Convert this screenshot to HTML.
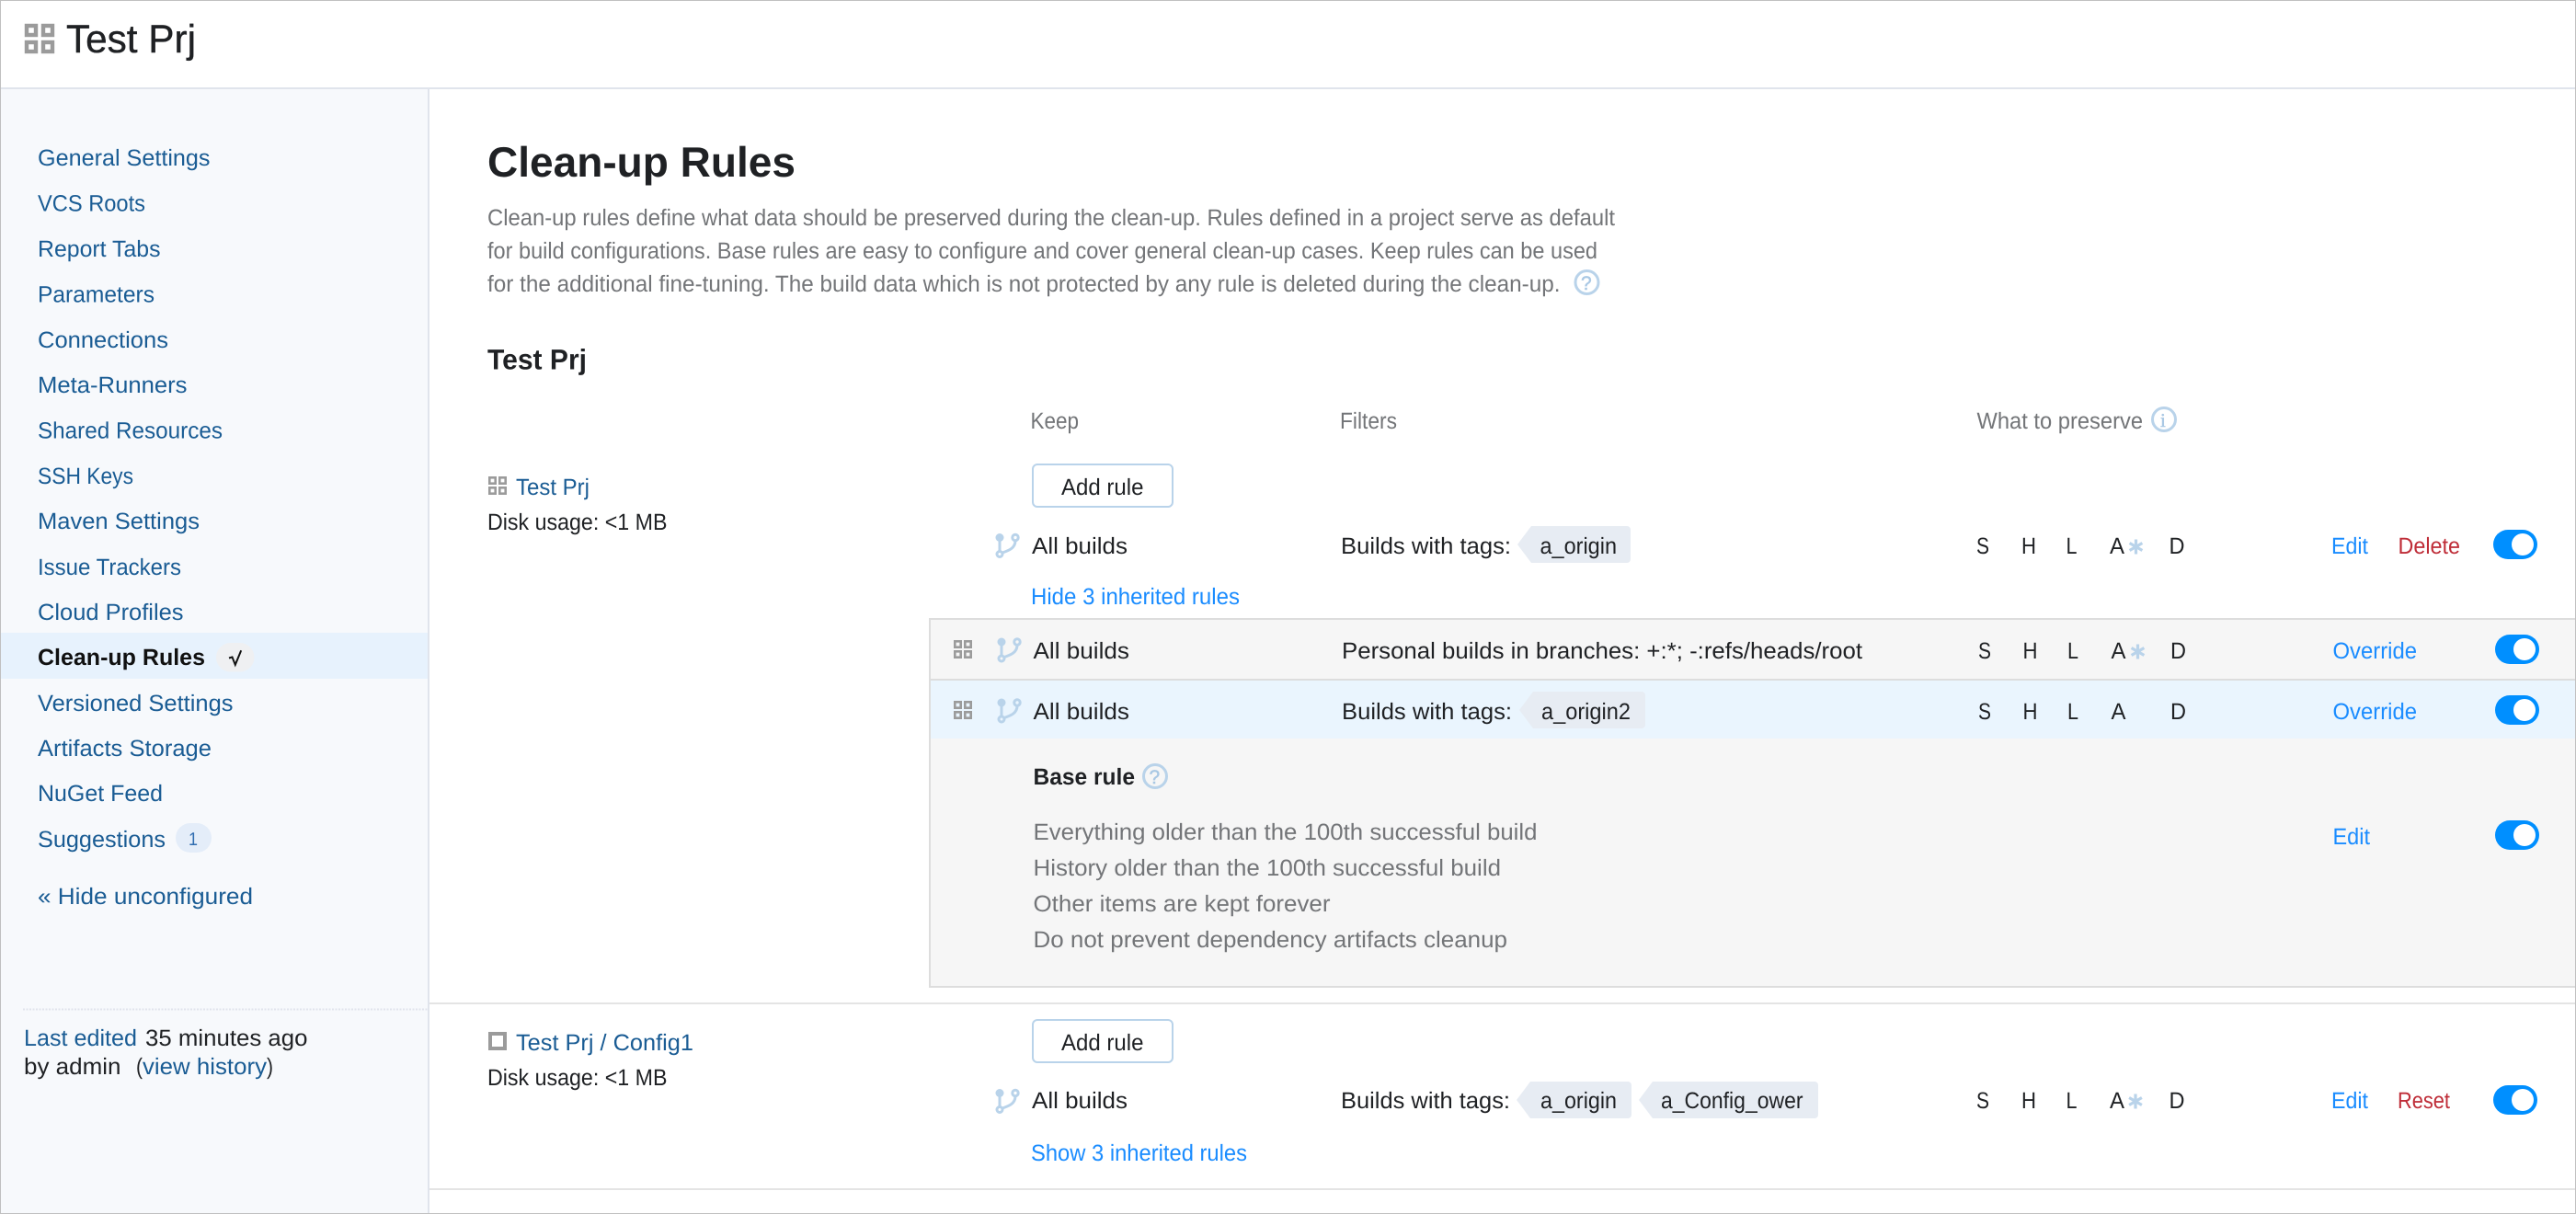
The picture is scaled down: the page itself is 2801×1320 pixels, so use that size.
<!DOCTYPE html>
<html lang="en"><head><meta charset="utf-8"><title>Clean-up Rules</title>
<style>
html,body{margin:0;padding:0;background:#fff;width:2801px;height:1320px;overflow:hidden}
svg{display:block}
text{font-family:"Liberation Sans",Arial,sans-serif;font-size:25px;fill:#1f2124;text-rendering:geometricPrecision;white-space:pre}
.n{fill:#1a5c94}
.g{fill:#737578}
.l{fill:#1a8cff}
.r{fill:#bf2d38}
.b{font-weight:700}
</style></head><body>
<svg xmlns="http://www.w3.org/2000/svg" width="2801" height="1320" viewBox="0 0 2801 1320">
<rect width="2801" height="1320" fill="#fff"/>
<!-- sidebar -->
<rect x="1" y="97" width="464" height="1222" fill="#f7f9fc"/>
<rect x="0" y="95" width="2801" height="2" fill="#e0e4ec"/>
<rect x="465" y="97" width="2" height="1222" fill="#e0e4ec"/>
<rect x="1" y="688" width="464" height="50" fill="#e7f2fd"/>
<!-- header -->
<g fill="none" stroke="#9b9b9b" stroke-width="4.4">
<rect x="29" y="28" width="10" height="10"/><rect x="47" y="28" width="10" height="10"/>
<rect x="29" y="46" width="10" height="10"/><rect x="47" y="46" width="10" height="10"/>
</g>
<text x="72" y="57" style="font-size:43px" textLength="141" lengthAdjust="spacingAndGlyphs" stroke="#1f2124" stroke-width=".4">Test Prj</text>
<!-- nav -->
<text class="n" x="41" y="180" textLength="187.5" lengthAdjust="spacingAndGlyphs">General Settings</text>
<text class="n" x="41" y="229.5" textLength="117" lengthAdjust="spacingAndGlyphs">VCS Roots</text>
<text class="n" x="41" y="279" textLength="133.5" lengthAdjust="spacingAndGlyphs">Report Tabs</text>
<text class="n" x="41" y="328.5" textLength="127" lengthAdjust="spacingAndGlyphs">Parameters</text>
<text class="n" x="41" y="378" textLength="142" lengthAdjust="spacingAndGlyphs">Connections</text>
<text class="n" x="41" y="427" textLength="162.5" lengthAdjust="spacingAndGlyphs">Meta-Runners</text>
<text class="n" x="41" y="476.5" textLength="201" lengthAdjust="spacingAndGlyphs">Shared Resources</text>
<text class="n" x="41" y="526" textLength="104" lengthAdjust="spacingAndGlyphs">SSH Keys</text>
<text class="n" x="41" y="575" textLength="176" lengthAdjust="spacingAndGlyphs">Maven Settings</text>
<text class="n" x="41" y="625" textLength="156" lengthAdjust="spacingAndGlyphs">Issue Trackers</text>
<text class="n" x="41" y="674" textLength="158.5" lengthAdjust="spacingAndGlyphs">Cloud Profiles</text>
<text class="b" style="fill:#111" x="41" y="723" textLength="182" lengthAdjust="spacingAndGlyphs">Clean-up Rules</text>
<rect x="235" y="699" width="41.5" height="31.5" rx="15.7" fill="#eff0f2"/>
<path d="M249 715.5l3.5-1 3.3 8.3 6.4-15.5" fill="none" stroke="#111" stroke-width="2"/>
<text class="n" x="41" y="773" textLength="212.5" lengthAdjust="spacingAndGlyphs">Versioned Settings</text>
<text class="n" x="41" y="822" textLength="189" lengthAdjust="spacingAndGlyphs">Artifacts Storage</text>
<text class="n" x="41" y="871" textLength="136" lengthAdjust="spacingAndGlyphs">NuGet Feed</text>
<text class="n" x="41" y="921" textLength="139" lengthAdjust="spacingAndGlyphs">Suggestions</text>
<rect x="191" y="895" width="39" height="32" rx="16" fill="#e4edf9"/>
<text x="205" y="919" style="font-size:20px;fill:#2f6cb0" textLength="10" lengthAdjust="spacingAndGlyphs">1</text>
<text class="n" x="41" y="983" textLength="234" lengthAdjust="spacingAndGlyphs">« Hide unconfigured</text>
<line x1="25" y1="1097.5" x2="465" y2="1097.5" stroke="#e0e4ec" stroke-width="2" stroke-dasharray="2 1.5"/>
<text class="n" x="26" y="1137" textLength="123" lengthAdjust="spacingAndGlyphs">Last edited</text>
<text x="158" y="1137" textLength="176.5" lengthAdjust="spacingAndGlyphs">35 minutes ago</text>
<text x="26" y="1168" textLength="105.5" lengthAdjust="spacingAndGlyphs">by admin</text>
<text x="148" y="1168" textLength="7" lengthAdjust="spacingAndGlyphs">(</text>
<text class="n" x="155" y="1168" textLength="135" lengthAdjust="spacingAndGlyphs">view history</text>
<text x="290" y="1168" textLength="7" lengthAdjust="spacingAndGlyphs">)</text>
<!-- heading -->
<text class="b" x="530" y="192" style="font-size:46px;fill:#1f2124" textLength="335" lengthAdjust="spacingAndGlyphs">Clean-up Rules</text>
<text class="g" x="530" y="245" textLength="1226" lengthAdjust="spacingAndGlyphs">Clean-up rules define what data should be preserved during the clean-up. Rules defined in a project serve as default</text>
<text class="g" x="530" y="281" textLength="1207" lengthAdjust="spacingAndGlyphs">for build configurations. Base rules are easy to configure and cover general clean-up cases. Keep rules can be used</text>
<text class="g" x="530" y="317" textLength="1166.5" lengthAdjust="spacingAndGlyphs">for the additional fine-tuning. The build data which is not protected by any rule is deleted during the clean-up.</text>
<circle cx="1725.5" cy="307" r="12.5" fill="none" stroke="#b9d3ea" stroke-width="3"/>
<text x="1719" y="315" style="font-size:21px;fill:#a9c8e4" stroke="#a9c8e4" stroke-width=".5">?</text>
<text class="b" x="530" y="401.5" style="font-size:31px" textLength="108" lengthAdjust="spacingAndGlyphs">Test Prj</text>
<!-- table header -->
<text class="g" x="1120.5" y="466" textLength="52.5" lengthAdjust="spacingAndGlyphs">Keep</text>
<text class="g" x="1457" y="466" textLength="62" lengthAdjust="spacingAndGlyphs">Filters</text>
<text class="g" x="2149.5" y="466" textLength="180.5" lengthAdjust="spacingAndGlyphs">What to preserve</text>
<circle cx="2353" cy="456" r="12.5" fill="none" stroke="#b9d3ea" stroke-width="3"/>
<text x="2349" y="464" style="font-size:21px;font-family:'Liberation Serif',serif;fill:#a9c8e4" stroke="#a9c8e4" stroke-width=".5">i</text>
<!-- Project row -->
<g fill="none" stroke="#9b9b9b" stroke-width="2.6">
<rect x="532.3" y="519.3" width="6.4" height="6.4"/><rect x="543.3" y="519.3" width="6.4" height="6.4"/>
<rect x="532.3" y="530.3" width="6.4" height="6.4"/><rect x="543.3" y="530.3" width="6.4" height="6.4"/>
</g>
<text class="n" x="561" y="538" textLength="80" lengthAdjust="spacingAndGlyphs">Test Prj</text>
<text x="530" y="576" textLength="195.5" lengthAdjust="spacingAndGlyphs">Disk usage: &lt;1 MB</text>
<rect x="1123" y="505" width="152" height="46" rx="5" fill="#fff" stroke="#b9d3ea" stroke-width="2"/>
<text x="1154" y="538" textLength="89.5" lengthAdjust="spacingAndGlyphs">Add rule</text>
<g transform="translate(1087 584.5)" fill="none" stroke="#b9d3ea" stroke-width="3"><circle r="4.5" fill="#b9d3ea" stroke="none"/><path d="M0 0V16"/><circle cy="18" r="3"/><circle cx="17" r="3.2"/><path d="M17 3.5c0 8-7 10.5-14 13"/></g>
<text x="1122" y="602" textLength="104" lengthAdjust="spacingAndGlyphs">All builds</text>
<text x="1458" y="602" textLength="185" lengthAdjust="spacingAndGlyphs">Builds with tags:</text>
<path d="M1650 592L1665 572H1769a4 4 0 0 1 4 4V608a4 4 0 0 1-4 4H1665Z" fill="#e7ecf3"/>
<text x="1674.5" y="602" textLength="83.5" lengthAdjust="spacingAndGlyphs">a_origin</text>
<text x="2149" y="602" textLength="14" lengthAdjust="spacingAndGlyphs">S</text>
<text x="2198" y="602" textLength="16" lengthAdjust="spacingAndGlyphs">H</text>
<text x="2246.5" y="602" textLength="12" lengthAdjust="spacingAndGlyphs">L</text>
<text x="2294" y="602" textLength="16" lengthAdjust="spacingAndGlyphs">A</text>
<g stroke="#b9d3ea" stroke-width="3.2"><path d="M2322.5 586.5v16M2315.6 590.5l13.8 8M2315.6 598.5l13.8-8"/></g>
<text x="2358.5" y="602" textLength="17" lengthAdjust="spacingAndGlyphs">D</text>
<text class="l" x="2535" y="602" textLength="40" lengthAdjust="spacingAndGlyphs">Edit</text>
<text class="r" x="2607.5" y="602" textLength="67.5" lengthAdjust="spacingAndGlyphs">Delete</text>
<rect x="2711" y="576" width="48" height="32" rx="16" fill="#008fff"/><circle cx="2743" cy="592" r="12" fill="#fff"/>
<text class="l" x="1121" y="657" textLength="227" lengthAdjust="spacingAndGlyphs">Hide 3 inherited rules</text>
<!-- inherited box -->
<rect x="1010" y="672" width="1790" height="402" fill="#ddd"/>
<rect x="1012" y="674" width="1788" height="64" fill="#f6f6f6"/>
<rect x="1012" y="740" width="1788" height="63" fill="#eaf5fe"/>
<rect x="1012" y="803" width="1788" height="269" fill="#f6f6f6"/>
<g fill="none" stroke="#9b9b9b" stroke-width="2.6">
<rect x="1038.3" y="697.3" width="6.4" height="6.4"/><rect x="1049.3" y="697.3" width="6.4" height="6.4"/>
<rect x="1038.3" y="708.3" width="6.4" height="6.4"/><rect x="1049.3" y="708.3" width="6.4" height="6.4"/>
<rect x="1038.3" y="763.3" width="6.4" height="6.4"/><rect x="1049.3" y="763.3" width="6.4" height="6.4"/>
<rect x="1038.3" y="774.3" width="6.4" height="6.4"/><rect x="1049.3" y="774.3" width="6.4" height="6.4"/>
</g>
<g transform="translate(1089 698)" fill="none" stroke="#b9d3ea" stroke-width="3"><circle r="4.5" fill="#b9d3ea" stroke="none"/><path d="M0 0V16"/><circle cy="18" r="3"/><circle cx="17" r="3.2"/><path d="M17 3.5c0 8-7 10.5-14 13"/></g>
<g transform="translate(1089 764)" fill="none" stroke="#b9d3ea" stroke-width="3"><circle r="4.5" fill="#b9d3ea" stroke="none"/><path d="M0 0V16"/><circle cy="18" r="3"/><circle cx="17" r="3.2"/><path d="M17 3.5c0 8-7 10.5-14 13"/></g>
<text x="1123.5" y="716" textLength="104.5" lengthAdjust="spacingAndGlyphs">All builds</text>
<text x="1459" y="716" textLength="566" lengthAdjust="spacingAndGlyphs">Personal builds in branches: +:*; -:refs/heads/root</text>
<text x="2151" y="716" textLength="14" lengthAdjust="spacingAndGlyphs">S</text>
<text x="2199.5" y="716" textLength="16" lengthAdjust="spacingAndGlyphs">H</text>
<text x="2248" y="716" textLength="12" lengthAdjust="spacingAndGlyphs">L</text>
<text x="2295.5" y="716" textLength="16" lengthAdjust="spacingAndGlyphs">A</text>
<g stroke="#b9d3ea" stroke-width="3.2"><path d="M2324.5 700.5v16M2317.6 704.5l13.8 8M2317.6 712.5l13.8-8"/></g>
<text x="2360" y="716" textLength="17" lengthAdjust="spacingAndGlyphs">D</text>
<text class="l" x="2536.5" y="716" textLength="91.5" lengthAdjust="spacingAndGlyphs">Override</text>
<rect x="2713" y="690" width="48" height="32" rx="16" fill="#008fff"/><circle cx="2745" cy="706" r="12" fill="#fff"/>
<text x="1123.5" y="782" textLength="104.5" lengthAdjust="spacingAndGlyphs">All builds</text>
<text x="1459" y="782" textLength="185" lengthAdjust="spacingAndGlyphs">Builds with tags:</text>
<path d="M1652 772L1667 752H1785a4 4 0 0 1 4 4V788a4 4 0 0 1-4 4H1667Z" fill="#e7ecf3"/>
<text x="1676" y="782" textLength="97" lengthAdjust="spacingAndGlyphs">a_origin2</text>
<text x="2151" y="782" textLength="14" lengthAdjust="spacingAndGlyphs">S</text>
<text x="2199.5" y="782" textLength="16" lengthAdjust="spacingAndGlyphs">H</text>
<text x="2248" y="782" textLength="12" lengthAdjust="spacingAndGlyphs">L</text>
<text x="2295.5" y="782" textLength="16" lengthAdjust="spacingAndGlyphs">A</text>
<text x="2360" y="782" textLength="17" lengthAdjust="spacingAndGlyphs">D</text>
<text class="l" x="2536.5" y="782" textLength="91.5" lengthAdjust="spacingAndGlyphs">Override</text>
<rect x="2713" y="756" width="48" height="32" rx="16" fill="#008fff"/><circle cx="2745" cy="772" r="12" fill="#fff"/>
<!-- base rule -->
<text class="b" x="1123.5" y="853" textLength="110.5" lengthAdjust="spacingAndGlyphs">Base rule</text>
<circle cx="1256" cy="844" r="12.5" fill="none" stroke="#b9d3ea" stroke-width="3"/>
<text x="1249.5" y="852" style="font-size:21px;fill:#a9c8e4" stroke="#a9c8e4" stroke-width=".5">?</text>
<text class="g" x="1123.5" y="913" textLength="548" lengthAdjust="spacingAndGlyphs">Everything older than the 100th successful build</text>
<text class="g" x="1123.5" y="952" textLength="508.5" lengthAdjust="spacingAndGlyphs">History older than the 100th successful build</text>
<text class="g" x="1123.5" y="991" textLength="323" lengthAdjust="spacingAndGlyphs">Other items are kept forever</text>
<text class="g" x="1123.5" y="1030" textLength="515.5" lengthAdjust="spacingAndGlyphs">Do not prevent dependency artifacts cleanup</text>
<text class="l" x="2536.5" y="918" textLength="40.5" lengthAdjust="spacingAndGlyphs">Edit</text>
<rect x="2713" y="892" width="48" height="32" rx="16" fill="#008fff"/><circle cx="2745" cy="908" r="12" fill="#fff"/>
<!-- separators -->
<rect x="467" y="1090" width="2334" height="2" fill="#e4e4e4"/>
<rect x="467" y="1292" width="2334" height="2" fill="#e4e4e4"/>
<!-- Config row -->
<rect x="533" y="1124" width="16" height="16" fill="none" stroke="#9b9b9b" stroke-width="4"/>
<text class="n" x="561" y="1142" textLength="193" lengthAdjust="spacingAndGlyphs">Test Prj / Config1</text>
<text x="530" y="1180" textLength="195.5" lengthAdjust="spacingAndGlyphs">Disk usage: &lt;1 MB</text>
<rect x="1123" y="1109" width="152" height="46" rx="5" fill="#fff" stroke="#b9d3ea" stroke-width="2"/>
<text x="1154" y="1142" textLength="89.5" lengthAdjust="spacingAndGlyphs">Add rule</text>
<g transform="translate(1087 1188.5)" fill="none" stroke="#b9d3ea" stroke-width="3"><circle r="4.5" fill="#b9d3ea" stroke="none"/><path d="M0 0V16"/><circle cy="18" r="3"/><circle cx="17" r="3.2"/><path d="M17 3.5c0 8-7 10.5-14 13"/></g>
<text x="1122" y="1205" textLength="104" lengthAdjust="spacingAndGlyphs">All builds</text>
<text x="1458" y="1205" textLength="184" lengthAdjust="spacingAndGlyphs">Builds with tags:</text>
<path d="M1649 1196L1664 1176H1770a4 4 0 0 1 4 4V1212a4 4 0 0 1-4 4H1664Z" fill="#e7ecf3"/>
<text x="1675" y="1205" textLength="83" lengthAdjust="spacingAndGlyphs">a_origin</text>
<path d="M1782 1196L1797 1176H1973a4 4 0 0 1 4 4V1212a4 4 0 0 1-4 4H1797Z" fill="#e7ecf3"/>
<text x="1806" y="1205" textLength="154.5" lengthAdjust="spacingAndGlyphs">a_Config_ower</text>
<text x="2149" y="1205" textLength="14" lengthAdjust="spacingAndGlyphs">S</text>
<text x="2198" y="1205" textLength="16" lengthAdjust="spacingAndGlyphs">H</text>
<text x="2246.5" y="1205" textLength="12" lengthAdjust="spacingAndGlyphs">L</text>
<text x="2294" y="1205" textLength="16" lengthAdjust="spacingAndGlyphs">A</text>
<g stroke="#b9d3ea" stroke-width="3.2"><path d="M2322 1189.5v16M2315.1 1193.5l13.8 8M2315.1 1201.5l13.8-8"/></g>
<text x="2358.5" y="1205" textLength="17" lengthAdjust="spacingAndGlyphs">D</text>
<text class="l" x="2535" y="1205" textLength="40" lengthAdjust="spacingAndGlyphs">Edit</text>
<text class="r" x="2607" y="1205" textLength="57" lengthAdjust="spacingAndGlyphs">Reset</text>
<rect x="2711" y="1180" width="48" height="32" rx="16" fill="#008fff"/><circle cx="2743" cy="1196" r="12" fill="#fff"/>
<text class="l" x="1121" y="1262" textLength="235" lengthAdjust="spacingAndGlyphs">Show 3 inherited rules</text>
<!-- frame -->
<rect x="0" y="0" width="2801" height="1" fill="#c0c0c0"/>
<rect x="0" y="1319" width="2801" height="1" fill="#c0c0c0"/>
<rect x="0" y="0" width="1" height="1320" fill="#c0c0c0"/>
<rect x="2800" y="0" width="1" height="1320" fill="#c0c0c0"/>
</svg>
</body></html>
